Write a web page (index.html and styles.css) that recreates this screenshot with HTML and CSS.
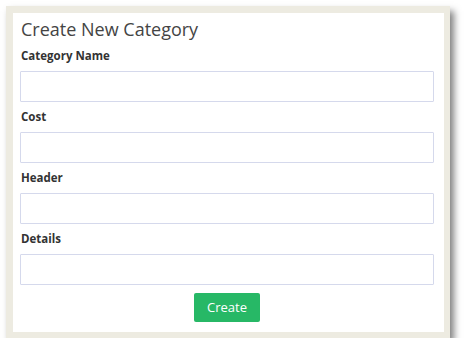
FILE: index.html
```html
<!DOCTYPE html>
<html>
<head>
<meta charset="utf-8">
<link rel="stylesheet" href="styles.css">
</head>
<body>
<div class="frame">
  <h1 class="title">Create New Category</h1>
  <form class="form">
    <label class="label">Category Name</label>
    <input class="input" type="text">
    <label class="label">Cost</label>
    <input class="input" type="text">
    <label class="label">Header</label>
    <input class="input" type="text">
    <label class="label">Details</label>
    <input class="input" type="text">
    <div class="actions"><button class="btn" type="button">Create</button></div>
  </form>
</div>
</body>
</html>
```
FILE: styles.css
```css
html, body { margin: 0; padding: 0; background: #fff; }
body { font-family: "Open Sans", "Liberation Sans", sans-serif; color: #333; }
.frame {
  margin: 6px 0 0 6px;
  border: 7px solid #edebe1;
  border-right-width: 6px;
  border-bottom-width: 6px;
  background: #fff;
  box-shadow: 4px 5px 7px rgba(0,0,0,0.5);
  padding: 5px 10px 0 7px;
  box-sizing: content-box;
  width: 414px;
  height: 314px;
}
.title {
  margin: 0 0 0 1px;
  font-size: 18px;
  line-height: 22px;
  font-weight: 400;
  color: #444;
}
.form { display: flex; flex-direction: column; margin-top: 8px; }
.label {
  display: block;
  margin-left: 1px;
  font-size: 11.5px;
  line-height: 16px;
  font-weight: 700;
  color: #333;
}
.input {
  box-sizing: border-box;
  height: 31px;
  margin: 7px 0 7px 0;
  width: 414px;
  border: 1px solid #d5d9ec;
  border-radius: 1px;
  background: #fff;
  padding: 0 8px;
}
.actions { display: flex; justify-content: center; margin-top: 1px; }
.btn {
  box-sizing: border-box;
  height: 29px;
  padding: 0 13px;
  border: none;
  border-radius: 2px;
  background: #27b866;
  color: #fff;
  font-family: "Open Sans", "Liberation Sans", sans-serif;
  font-size: 13px;
  line-height: 29px;
}
```
